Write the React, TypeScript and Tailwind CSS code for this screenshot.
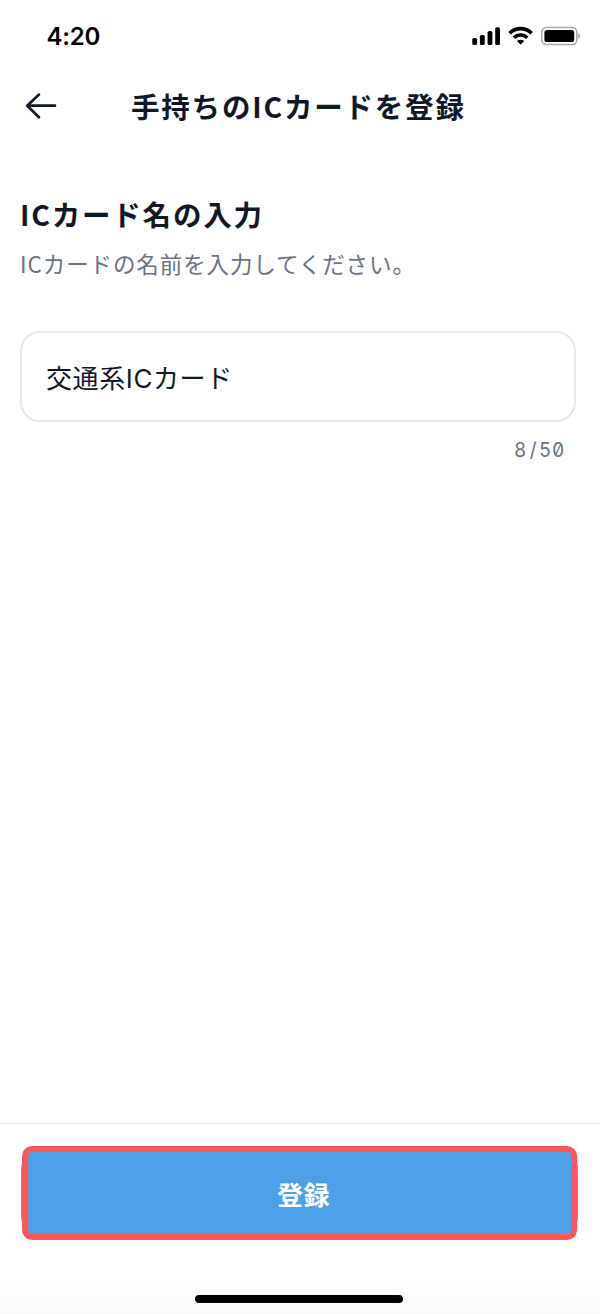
import { useState } from 'react'

const MAX_LENGTH = 50

function StatusBar() {
  return (
    <div className="flex h-[73px] items-center justify-between pl-[46.5px] pr-5 text-black">
      <span className="font-['Inter',sans-serif] text-[24px] leading-8 font-semibold tracking-[-0.2px]">4:20</span>
      <svg width="108" height="20" viewBox="0 0 108 20" fill="none" className="mb-px">
        {/* signal */}
        <rect x="0.3" y="12" width="4.8" height="7" rx="1.6" fill="#000" />
        <rect x="7.9" y="9" width="4.8" height="10" rx="1.6" fill="#000" />
        <rect x="15.6" y="5" width="4.8" height="14" rx="1.6" fill="#000" />
        <rect x="23.2" y="1.2" width="4.8" height="17.8" rx="1.6" fill="#000" />
        {/* wifi */}
        <path d="M37.6 7.2a15.6 15.6 0 0 1 22 0" stroke="#000" strokeWidth="3.6" />
        <path d="M41.9 11.7a9.6 9.6 0 0 1 13.4 0" stroke="#000" strokeWidth="3.3" />
        <path d="M45 15.1a5.2 5.2 0 0 1 7.2 0L48.6 18.8z" fill="#000" />
        {/* battery */}
        <rect x="69.8" y="1.4" width="35" height="17.2" rx="4.6" stroke="#000" strokeOpacity="0.35" strokeWidth="1.5" />
        <rect x="72.4" y="4" width="29.8" height="12" rx="2.6" fill="#000" />
        <path d="M106.4 7v6c1-.5 1.6-1.6 1.6-3s-.6-2.5-1.6-3z" fill="#000" fillOpacity="0.4" />
      </svg>
    </div>
  )
}

function Header() {
  return (
    <header className="flex h-[66px] items-center pl-6">
      <button type="button" aria-label="戻る" className="w-[107px]">
        <svg width="34" height="30" viewBox="0 0 34 30" fill="none" stroke="#111827" strokeWidth="2.7" strokeLinecap="round" strokeLinejoin="round">
          <path d="M15 3.6L3.2 14.7L15 26.2M3.2 14.7H31" />
        </svg>
      </button>
      <h1 className="text-[28.5px] leading-10 font-bold tracking-[1.8px] whitespace-nowrap">手持ちのICカードを登録</h1>
    </header>
  )
}

function Counter({ value }: { value: string }) {
  return (
    <p className="mt-4 flex justify-end pr-3 font-['Inter',sans-serif] text-[20px] leading-6 text-gray-500 tabular-nums slashed-zero">
      {value.split('').map((char, i) => (
        <span key={i} className="flex w-[12.4px] scale-x-95 justify-center">{char}</span>
      ))}
    </p>
  )
}

export default function App() {
  const [name, setName] = useState('交通系ICカード')

  return (
    <div className="flex h-[1314px] w-[600px] flex-col bg-white font-['Noto_Sans_CJK_JP',sans-serif] text-gray-900">
      <StatusBar />
      <Header />

      <main className="flex-1 pt-[54px] pr-6 pl-5">
        <h2 className="text-[28.5px] leading-[42px] font-bold tracking-[1.8px]">ICカード名の入力</h2>
        <p className="mt-3 text-[22.5px] leading-8 tracking-[0.9px] text-gray-500">ICカードの名前を入力してください。</p>
        <input
          type="text"
          value={name}
          maxLength={MAX_LENGTH}
          onChange={(e) => setName(e.target.value)}
          className="mt-[52px] block h-[91px] w-full rounded-[20px] border-2 border-[#e7e7e8] px-6 font-['Inter','Noto_Sans_CJK_JP',sans-serif] text-[26px] tracking-[0.6px] outline-none"
        />
        <Counter value={`${name.length}/${MAX_LENGTH}`} />
      </main>

      <footer className="flex h-[191px] flex-col items-center border-t border-[#e5e5e6] bg-linear-to-b from-white from-80% to-[#fafafa] pt-[22px]">
        <div className="mr-px flex w-[557px] justify-center rounded-[24px] bg-[#4ca1e9]">
          <button
            type="button"
            className="h-[94px] w-[555px] rounded-[10px] border-[6px] border-[#ff5558] bg-[#4ca1e9] pl-2 text-[26px] font-bold tracking-[0.6px] text-white"
          >
            登録
          </button>
        </div>
        <div className="mt-[55px] mr-0.5 h-2 w-[208px] rounded-full bg-black" />
      </footer>
    </div>
  )
}
